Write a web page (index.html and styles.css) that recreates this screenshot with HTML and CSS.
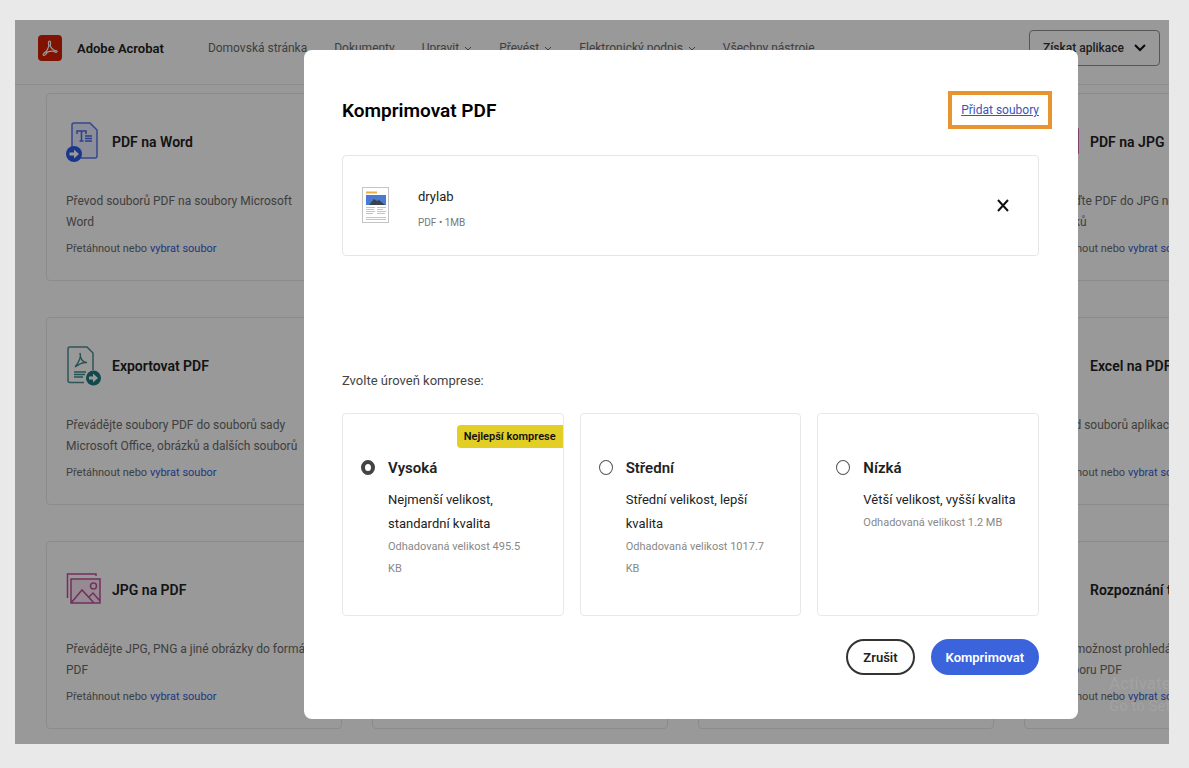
FILE: index.html
```
<!DOCTYPE html>
<html lang="cs">
<head>
    <meta charset="UTF-8">
    <meta name="viewport" content="width=device-width, initial-scale=1.0">
    <title>Adobe Acrobat - Komprimovat PDF</title>
    <link rel="stylesheet" href="styles.css">
</head>
<body>
    <div class="screen">
        <header class="header">
            <svg class="logo" viewBox="0 0 24 26" aria-hidden="true">
                <rect width="24" height="26" rx="4" fill="#d41f00"/>
                <path d="M11.6 6.2c1.300 0 1.200 2.500.500 4.600 1 2.300 2.600 3.900 4.300 4.500 2 .200 3 .700 2.700 1.500-.500 1-2.600.300-4.200-.700-2-.100-3.900.300-5.600 1-1.400 2.500-3 3.800-3.900 3.200-.900-.900.500-2.500 2.800-3.700 1.200-2 2.200-4.100 2.700-5.800-.700-2-.800-4.600.700-4.600z" fill="none" stroke="#fff" stroke-width="1.200"/>
            </svg>
            <strong class="brand">Adobe Acrobat</strong>
            <nav class="nav">
                <a href="#">Domovská stránka</a>
                <a href="#">Dokumenty</a>
                <a href="#">Upravit <svg class="caret" viewBox="0 0 8 8"><path d="M1 3l3 3 3-3"/></svg></a>
                <a href="#">Převést <svg class="caret" viewBox="0 0 8 8"><path d="M1 3l3 3 3-3"/></svg></a>
                <a href="#">Elektronický podpis <svg class="caret" viewBox="0 0 8 8"><path d="M1 3l3 3 3-3"/></svg></a>
                <a href="#">Všechny nástroje</a>
            </nav>
            <button class="get-app" type="button">Získat aplikace
                <svg viewBox="0 0 12 8"><path d="M1 1l5 5 5-5"/></svg>
            </button>
        </header>

        <main class="tools">
            <article class="card">
                <h2>
                    <svg class="icon" viewBox="0 0 36 42" aria-hidden="true">
                        <path d="M8 2h16l7 7v26a2 2 0 0 1-2 2H8a2 2 0 0 1-2-2V4a2 2 0 0 1 2-2z" fill="#e9edff" stroke="#5b76f0" stroke-width="1.500"/>
                        <path d="M11 13v-3h9v3M15.500 10v10M13.500 20h4M19 15h7M19 17.500h7M19 20h7" fill="none" stroke="#4a69e8" stroke-width="1.500"/>
                        <circle cx="8" cy="33" r="8" fill="#2c5be8"/>
                        <path d="M3.500 31.500H8v-3l5 4.500-5 4.500v-3H3.500z" fill="#fff"/>
                    </svg>
                    PDF na Word
                </h2>
                <p class="desc">Převod souborů PDF na soubory Microsoft<br>Word</p>
                <p class="drop">Přetáhnout nebo <a href="#">vybrat soubor</a></p>
            </article>
            <article class="card"></article>
            <article class="card"></article>
            <article class="card">
                <h2>
                    <svg class="icon" viewBox="0 0 36 42" aria-hidden="true">
                        <path d="M5 8h29v24H5z" fill="#fbe6f5" stroke="#c83b9a" stroke-width="1.500"/>
                    </svg>
                    PDF na JPG
                </h2>
                <p class="desc">Převeďte PDF do JPG nebo jiných<br>obrázků</p>
                <p class="drop">Přetáhnout nebo <a href="#">vybrat soubor</a></p>
            </article>

            <article class="card">
                <h2>
                    <svg class="icon" viewBox="0 0 36 42" aria-hidden="true">
                        <path d="M18 37.500H4a2 2 0 0 1-2-2V4a2 2 0 0 1 2-2h17l6 6v17" fill="none" stroke="#4d8f92" stroke-width="1.500"/>
                        <path d="M14 8c1.500 4-1 9-5 14 4-3 8-5 12-4.500-4 .500-7-4-7-9.500zM8 27h12M8 29.500h11M8 32h9" fill="none" stroke="#3f8a8e" stroke-width="1.400"/>
                        <circle cx="27.500" cy="33" r="7.500" fill="#1d7b80"/>
                        <path d="M23 31.500h4v-3l5 4.500-5 4.500v-3h-4z" fill="#fff"/>
                    </svg>
                    Exportovat PDF
                </h2>
                <p class="desc">Převádějte soubory PDF do souborů sady<br>Microsoft Office, obrázků a dalších souborů</p>
                <p class="drop">Přetáhnout nebo <a href="#">vybrat soubor</a></p>
            </article>
            <article class="card"></article>
            <article class="card"></article>
            <article class="card">
                <h2><span class="icon"></span>Excel na PDF</h2>
                <p class="desc">Převod souborů aplikace Excel do PDF</p>
                <p class="drop">Přetáhnout nebo <a href="#">vybrat soubor</a></p>
            </article>

            <article class="card">
                <h2>
                    <svg class="icon" viewBox="0 0 36 42" aria-hidden="true">
                        <path d="M5 10h29v24H5z" fill="#fbe6f5"/>
                        <path d="M1.500 29V5H30v2M5 10h29v24H5zM5 34l11-13 12 13M23 28l4-4 7 8" fill="none" stroke="#c0509c" stroke-width="1.500"/>
                        <circle cx="27.500" cy="17" r="3" fill="none" stroke="#c0509c" stroke-width="1.500"/>
                    </svg>
                    JPG na PDF
                </h2>
                <p class="desc">Převádějte JPG, PNG a jiné obrázky do formátu<br>PDF</p>
                <p class="drop">Přetáhnout nebo <a href="#">vybrat soubor</a></p>
            </article>
            <article class="card"></article>
            <article class="card"></article>
            <article class="card">
                <h2><span class="icon"></span>Rozpoznání textu</h2>
                <p class="desc">Přidá možnost prohledávat text<br>v souboru PDF</p>
                <p class="drop">Přetáhnout nebo <a href="#">vybrat soubor</a></p>
            </article>
        </main>

        <div class="overlay">
            <section class="dialog" role="dialog" aria-labelledby="dialog-title">
                <div class="dialog-head">
                    <h1 id="dialog-title">Komprimovat PDF</h1>
                    <div class="highlight"><a href="#">Přidat soubory</a></div>
                </div>

                <div class="file">
                    <svg class="thumb" viewBox="0 0 27 36" aria-hidden="true">
                        <rect x=".5" y=".5" width="26" height="35" fill="#fff" stroke="#c4c4c4"/>
                        <path d="M4 5.500h11" stroke="#e3b04b" stroke-width="2"/>
                        <rect x="4" y="8" width="20" height="10" fill="#4a7bd0"/>
                        <path d="M7 18l5-6 3 2 2-1 6 5z" fill="#3b4248"/>
                        <path d="M4 20.500h9M4 22.500h8M4 24.500h9M4 26.500h7M15 20.500h9M15 22.500h6M15 24.500h9M15 26.500h8M4 30.500h20M4 32.500h20" stroke="#c4c4c4"/>
                    </svg>
                    <div class="file-info">
                        <div class="file-name">drylab</div>
                        <div class="file-meta">PDF • 1MB</div>
                    </div>
                    <button class="remove" type="button" aria-label="Odebrat">
                        <svg viewBox="0 0 12 14"><path d="M1 2l10 11M11 2L1 13"/></svg>
                    </button>
                </div>

                <p class="level-label" id="level-label">Zvolte úroveň komprese:</p>

                <div class="levels" role="radiogroup" aria-labelledby="level-label">
                    <label class="level">
                        <span class="badge">Nejlepší komprese</span>
                        <input type="radio" name="level" checked>
                        <span class="level-text">
                            <span class="level-title">Vysoká</span>
                            <span class="level-desc">Nejmenší velikost,<br>standardní kvalita</span>
                            <span class="level-size">Odhadovaná velikost 495.5<br>KB</span>
                        </span>
                    </label>
                    <label class="level">
                        <input type="radio" name="level">
                        <span class="level-text">
                            <span class="level-title">Střední</span>
                            <span class="level-desc">Střední velikost, lepší<br>kvalita</span>
                            <span class="level-size">Odhadovaná velikost 1017.7<br>KB</span>
                        </span>
                    </label>
                    <label class="level">
                        <input type="radio" name="level">
                        <span class="level-text">
                            <span class="level-title">Nízká</span>
                            <span class="level-desc">Větší velikost, vyšší kvalita</span>
                            <span class="level-size">Odhadovaná velikost 1.2 MB</span>
                        </span>
                    </label>
                </div>

                <div class="actions">
                    <button class="btn" type="button">Zrušit</button>
                    <button class="btn btn-primary" type="button">Komprimovat</button>
                </div>
            </section>
        </div>

        <div class="watermark">
            <div class="watermark-title">Activate Windows</div>
            <div>Go to Settings</div>
        </div>
    </div>
</body>
</html>
```
FILE: styles.css
```
* {
    box-sizing: border-box;
}

body {
    margin: 0;
    min-height: 100vh;
    padding: 20px 20px 24px 15px;
    background: #e9e9e9;
    color: #222;
    font-family: Roboto, "Noto Sans", sans-serif;
    font-size: 13px;
}

h1, h2, p {
    margin: 0;
}

.screen {
    position: relative;
    overflow: hidden;
    background: #fff;
}

/* header */
.header {
    display: flex;
    align-items: center;
    height: 65px;
    padding: 0 9px 8px 23px;
    border-bottom: 1px solid #eaeaea;
}

.logo {
    width: 24px;
    height: 26px;
}

.brand {
    margin-left: 15px;
    font-size: 13px;
    font-weight: 600;
}

.nav {
    display: flex;
    gap: 27px;
    margin-left: 44px;
    font-size: 12px;
    white-space: nowrap;
}

.nav a {
    color: #6a6a6a;
    text-decoration: none;
}

.caret {
    width: 8px;
    height: 8px;
    margin-left: 2px;
    fill: none;
    stroke: #6a6a6a;
    stroke-width: 1px;
}

.get-app {
    display: flex;
    align-items: center;
    gap: 10px;
    height: 36px;
    margin-left: auto;
    padding: 0 13px;
    border: 1px solid #909090;
    border-radius: 4px;
    background: none;
    color: #333;
    font: 500 12px Roboto, sans-serif;
}

.get-app svg {
    width: 12px;
    height: 8px;
    fill: none;
    stroke: #111;
    stroke-width: 2px;
}

/* tool cards */
.tools {
    display: grid;
    grid-template-columns: repeat(4, 296px);
    gap: 36px 30px;
    padding: 8px 0 15px 31px;
}

.card {
    min-height: 188px;
    padding: 27px 19px 19px;
    border: 1px solid #e8e8e8;
    border-radius: 4px;
}

.card h2 {
    display: flex;
    align-items: center;
    gap: 10px;
    height: 42px;
    font-size: 14px;
    font-weight: 600;
}

.icon {
    width: 36px;
    height: 42px;
}

.desc {
    min-height: 42px;
    margin-top: 28px;
    color: #6a6a6a;
    font-size: 12px;
    line-height: 21px;
    white-space: nowrap;
}

.drop {
    margin-top: 8px;
    color: #6a6a6a;
    font-size: 11px;
    line-height: 16px;
}

.drop a {
    color: #3a59d6;
    text-decoration: none;
}

/* dialog */
.overlay {
    position: absolute;
    inset: 0;
    padding: 30px 91px 25px 289px;
    background: rgba(0, 0, 0, 0.4);
}

.dialog {
    height: 100%;
    padding: 41px 39px 44px 38px;
    border-radius: 8px;
    background: #fff;
}

.dialog-head {
    display: flex;
    align-items: center;
    justify-content: space-between;
}

.dialog-head h1 {
    color: #000;
    font-size: 19px;
    font-weight: 600;
}

.highlight {
    margin-right: -13px;
    padding: 6px 9px;
    border: 4px solid #e8952f;
    font-size: 12px;
    line-height: 18px;
}

.highlight a {
    color: #3a55b8;
}

.file {
    display: flex;
    align-items: center;
    height: 101px;
    margin-top: 26px;
    padding: 0 29px 2px 19px;
    border: 1px solid #e6e6e6;
    border-radius: 4px;
}

.thumb {
    width: 27px;
    height: 36px;
}

.file-info {
    flex: 1;
    margin-left: 29px;
    padding-top: 8px;
}

.file-name {
    line-height: 20px;
}

.file-meta {
    margin-top: 8px;
    color: #777;
    font-size: 10px;
    line-height: 16px;
}

.remove {
    display: flex;
    padding: 0;
    border: 0;
    background: none;
}

.remove svg {
    width: 12px;
    height: 14px;
    fill: none;
    stroke: #111;
    stroke-width: 2px;
}

.level-label {
    margin-top: 115px;
    color: #444;
    line-height: 20px;
}

.levels {
    display: grid;
    grid-template-columns: repeat(3, 1fr);
    gap: 16px;
    margin-top: 22px;
}

.level {
    position: relative;
    display: flex;
    gap: 13px;
    min-height: 203px;
    padding: 42px 18px 20px;
    border: 1px solid #e8e8e8;
    border-radius: 4px;
}

.level input {
    appearance: none;
    flex: none;
    width: 14px;
    height: 15px;
    margin: 4px 0 0;
    border: 1px solid #555;
    border-radius: 50%;
    background: #fff;
}

.level input:checked {
    border: 4px solid #444;
}

.badge {
    position: absolute;
    top: 11px;
    right: 0;
    padding: 0 7px;
    border-radius: 4px 0 0 4px;
    background: #e3ce26;
    color: #111;
    font-size: 11px;
    font-weight: 600;
    line-height: 23px;
}

.level-text {
    white-space: nowrap;
}

.level-title,
.level-desc,
.level-size {
    display: block;
}

.level-title {
    margin-bottom: 8px;
    font-size: 15px;
    font-weight: 600;
    line-height: 24px;
}

.level-desc {
    line-height: 24px;
}

.level-size {
    color: #888;
    font-size: 11px;
    line-height: 22px;
}

.actions {
    display: flex;
    justify-content: flex-end;
    gap: 16px;
    margin-top: 23px;
}

.btn {
    height: 36px;
    padding: 0 15px;
    border: 2px solid #333;
    border-radius: 18px;
    background: #fff;
    color: #222;
    font: 600 13px Roboto, sans-serif;
}

.btn-primary {
    padding: 0 13px;
    border-color: #3b63db;
    background: #3b63db;
    color: #fff;
}

/* system watermark, runs past the right edge of the screen */
.watermark {
    position: absolute;
    right: -70px;
    bottom: 27px;
    width: 130px;
    color: rgba(255, 255, 255, 0.1);
    font-size: 15px;
    line-height: 22px;
    white-space: nowrap;
}

.watermark-title {
    font-size: 17px;
    line-height: 24px;
}
```
